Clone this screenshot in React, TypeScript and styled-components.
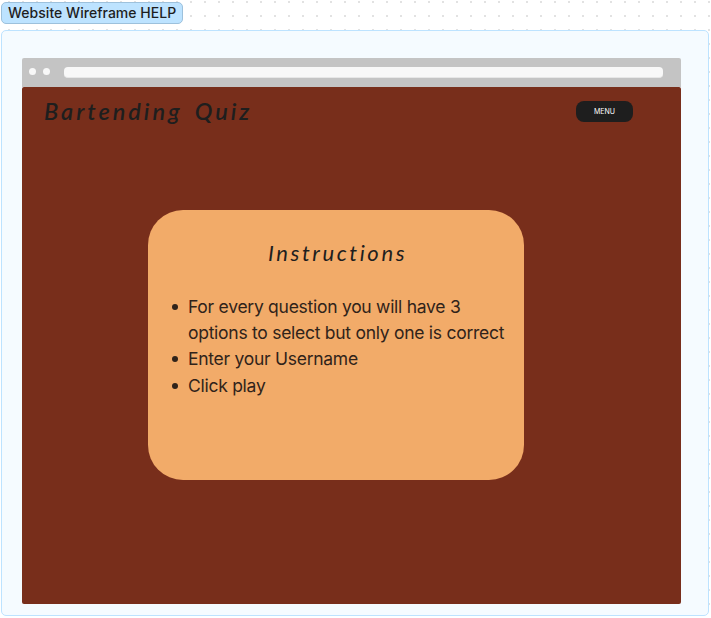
import React from "react";
import styled, { createGlobalStyle } from "styled-components";

const GlobalStyle = createGlobalStyle`
  *, *::before, *::after { box-sizing: border-box; }
  html, body { margin: 0; padding: 0; background: #fff; }
  body { overflow: hidden; font-family: Inter, "Liberation Sans", sans-serif; }
`;

const Canvas = styled.main`
  width: 711px;
  height: 617px;
  padding: 2px 0 0 1px;
  display: flex;
  flex-direction: column;
  align-items: flex-start;
  background-color: #fff;
  background-image: radial-gradient(circle at 1px 1px, #e2e2e2 0.8px, transparent 1.1px);
  background-size: 14px 14px;
  background-position: 8px 1px;
`;

const SectionLabel = styled.div`
  width: 182px;
  height: 22px;
  padding-left: 6px;
  border: 1px solid #9dc1dc;
  border-radius: 5px;
  background: #bde3ff;
  color: #1e1e1e;
  font-size: 14px;
  font-weight: 500;
  line-height: 20px;
  letter-spacing: 0.03px;
  white-space: nowrap;
`;

const Section = styled.section`
  width: 708px;
  height: 586px;
  margin-top: 6px;
  padding: 27px 0 0 20px;
  border: 1px solid #bde3ff;
  border-radius: 5px;
  background: #f5fbff;
`;

const BrowserBar = styled.div`
  width: 659px;
  height: 29px;
  padding: 0 18px 0 7px;
  display: flex;
  align-items: center;
  border-radius: 2px 2px 0 0;
  background: #c4c4c4;
`;

const WindowDot = styled.span`
  width: 7px;
  height: 7px;
  margin: 0 7px 3px 0;
  border-radius: 50%;
  background: #f8f8f8;
`;

const AddressField = styled.div`
  flex: 1;
  height: 11px;
  margin-left: 7px;
  border-radius: 4px;
  border-bottom: 1px solid #e7e7e7;
  background: #f8f8f8;
`;

const Page = styled.div`
  width: 659px;
  height: 517px;
  border-radius: 2px;
  background: #782e1b;
`;

const Header = styled.header`
  height: 48px;
  padding: 0 48px 0 22px;
  display: flex;
  align-items: center;
  justify-content: space-between;
`;

const script = `"Segoe Print", "Bradley Hand", Lato, sans-serif`;

const Brand = styled.h1`
  margin: 0 0 1px;
  font-family: ${script};
  font-size: 23.5px;
  font-style: italic;
  font-weight: 600;
  line-height: 30px;
  letter-spacing: 2.95px;
  word-spacing: 4px;
  white-space: nowrap;
  color: #1e1e1e;
`;

const MenuButton = styled.button`
  width: 57px;
  height: 21px;
  padding: 0;
  border: 0;
  border-radius: 8px;
  background: #1e1e1e;
  color: #fff;
  font: 400 7px/21px Inter, sans-serif;
`;

const Card = styled.article`
  width: 376px;
  height: 270px;
  margin: 75px 0 0 126px;
  padding-top: 28px;
  border-radius: 35px;
  background: #f2ab69;
  color: #1e1e1e;
`;

const CardTitle = styled.h2`
  margin: 0;
  padding-left: 3px;
  font-family: ${script};
  font-size: 22px;
  font-style: italic;
  font-weight: 400;
  line-height: 30px;
  letter-spacing: 2.6px;
  text-align: center;
`;

const Steps = styled.ul`
  margin: 26px 0 0;
  padding: 0 0 0 40px;
  list-style: none;
  color: #30231a;
  font-size: 17.5px;
  line-height: 26.2px;
  letter-spacing: -0.27px;
`;

const Step = styled.li`
  position: relative;
  white-space: pre-line;

  &::before {
    content: "";
    position: absolute;
    left: -16px;
    top: 10px;
    width: 6px;
    height: 6px;
    border-radius: 50%;
    background: currentColor;
  }
`;

const steps = [
  "For every question you will have 3\noptions to select but only one is correct",
  "Enter your Username",
  "Click play",
];

export default function App() {
  return (
    <>
      <GlobalStyle />
      <Canvas>
        <SectionLabel>Website Wireframe HELP</SectionLabel>
        <Section>
          <BrowserBar>
            <WindowDot />
            <WindowDot />
            <AddressField />
          </BrowserBar>
          <Page>
            <Header>
              <Brand>Bartending Quiz</Brand>
              <MenuButton>MENU</MenuButton>
            </Header>
            <Card>
              <CardTitle>Instructions</CardTitle>
              <Steps>
                {steps.map((step) => (
                  <Step key={step}>{step}</Step>
                ))}
              </Steps>
            </Card>
          </Page>
        </Section>
      </Canvas>
    </>
  );
}
